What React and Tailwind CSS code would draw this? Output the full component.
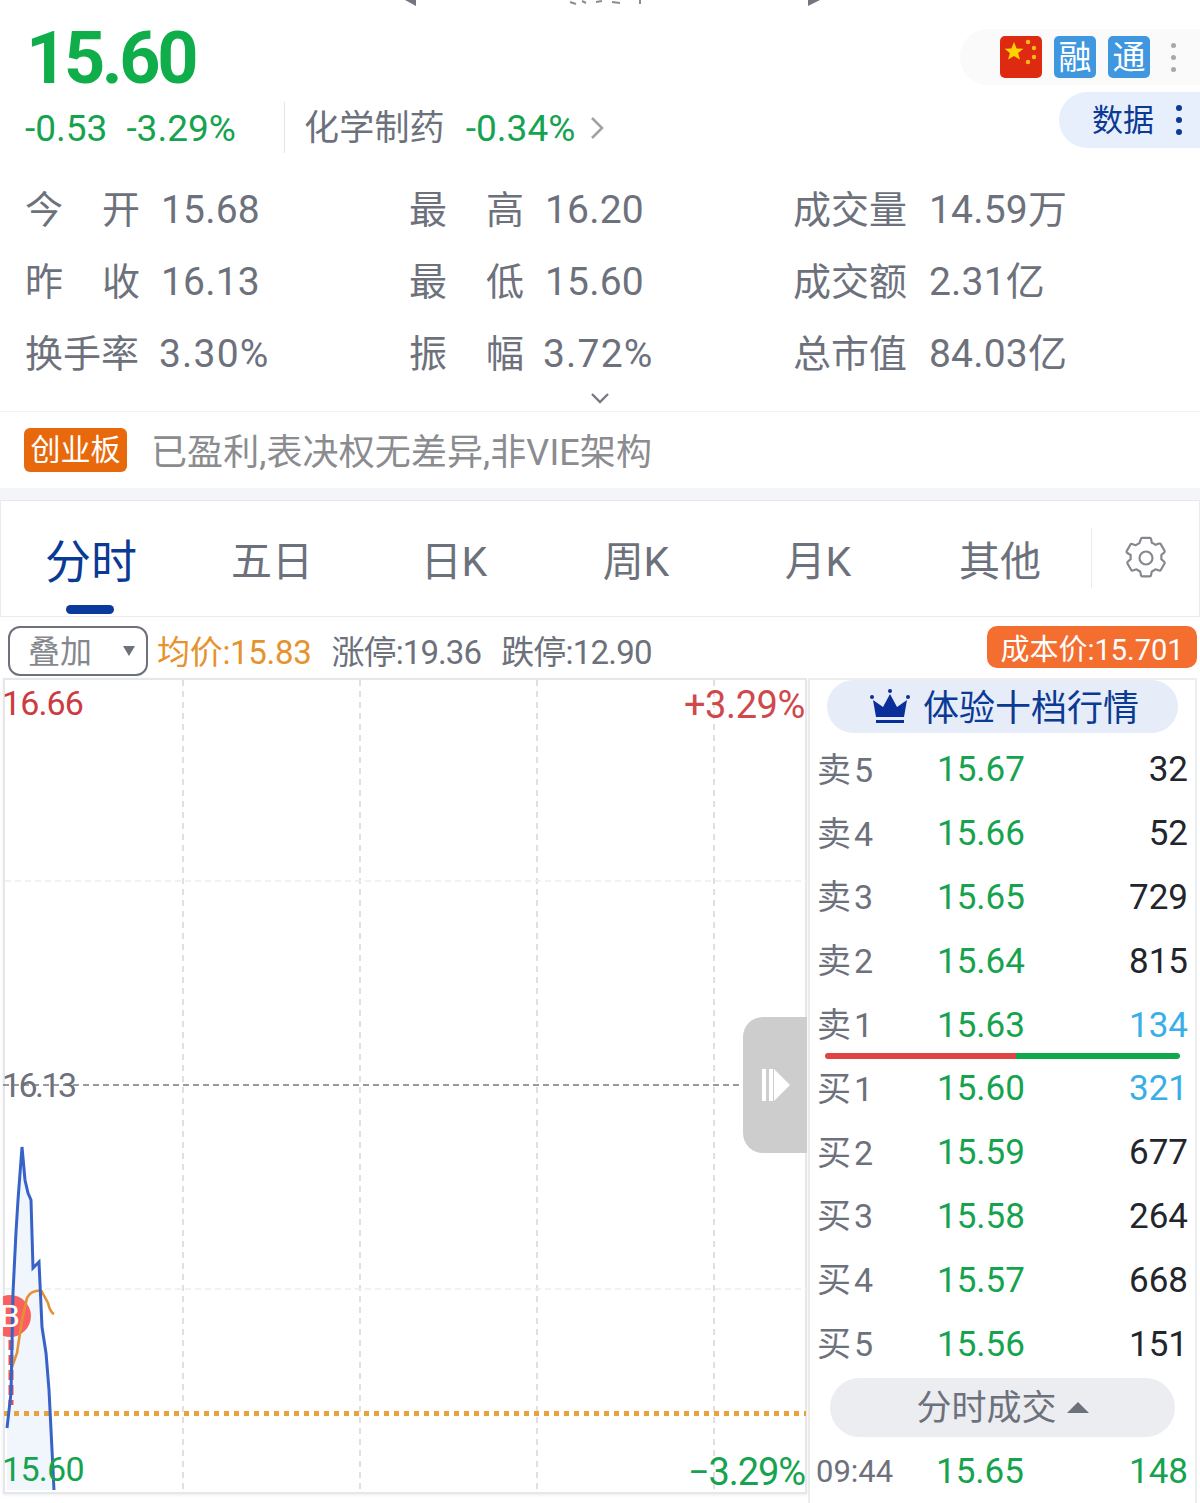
import React from "react";

const FONT = "font-['Roboto','Noto_Sans_CJK_SC',sans-serif]";
const stats = [
  [["今", "开"], "15.68", ["最", "高"], "16.20", ["成交量"], "14.59万"],
  [["昨", "收"], "16.13", ["最", "低"], "15.60", ["成交额"], "2.31亿"],
  [["换手率"], "3.30%", ["振", "幅"], "3.72%", ["总市值"], "84.03亿"],
];
const tabs = ["五日", "日K", "周K", "月K", "其他"];
const sells = [["卖5", "15.67", "32"], ["卖4", "15.66", "52"], ["卖3", "15.65", "729"], ["卖2", "15.64", "815"], ["卖1", "15.63", "134"]];
const buys = [["买1", "15.60", "321"], ["买2", "15.59", "677"], ["买3", "15.58", "264"], ["买4", "15.57", "668"], ["买5", "15.56", "151"]];

function Stat({ label, value }) {
  const pct = value.includes("%");
  return (
    <div className="flex items-center h-[72px]">
      <div className="w-[115px] flex justify-between text-[38px] leading-none text-[#6d717c]">
        {label.map((l) => <span key={l}>{l}</span>)}
      </div>
      <div className={`text-[39px] leading-none text-[#6d717c] ${pct ? "ml-[19px] tracking-[1.2px]" : "ml-[21px] tracking-[0.2px]"}`}>{value}</div>
    </div>
  );
}

function BookRow({ row, blue }) {
  return (
    <div className="flex items-center h-[63.8px] shrink-0 pl-[7px] pr-[7px]">
      <span className="w-[120px] text-[34px] leading-none text-[#6d717c] tracking-[3px]">{row[0]}</span>
      <span className="text-[35px] leading-none text-[#16a34f]">{row[1]}</span>
      <span className={`ml-auto text-[35px] leading-none ${blue ? "text-[#3aaee8]" : "text-[#23252c]"}`}>{row[2]}</span>
    </div>
  );
}

export default function App() {
  return (
    <div className={`relative w-[1200px] h-[1503px] overflow-hidden bg-white ${FONT}`}>
      <svg className="absolute left-0 top-0" width="1200" height="8" viewBox="0 0 1200 8">
        <path d="M416 0V6L405 0ZM808 0V6L820 0Z" fill="#73767f" />
        <path d="M570 2l6 2M582 1l4 2M596 2l6-1M612 2l8 1M640 0v4" stroke="#8b8d95" strokeWidth="2" fill="none" />
      </svg>

      {/* header */}
      <div className="h-[412px] border-b border-[#f2f3f5] relative">
        <div className="flex justify-between h-[92px]">
          <div className="ml-[26px] mt-[16px] text-[72px] leading-[86px] font-bold text-[#0fae4a] tracking-[-3.4px]">15.60</div>
          <div className="mt-[29px] h-[56px] w-[240px] rounded-l-[28px] bg-[#fafafa] flex items-center pl-[40px] gap-[12px]">
            <svg width="42" height="42" viewBox="0 0 42 42" className="shrink-0">
              <rect width="42" height="42" rx="5" fill="#df2a12" />
              <polygon fill="#ffd400" points="14,6 16.6,12.4 23.4,12.8 18.1,17 19.9,23.6 14,20 8.1,23.6 9.9,17 4.6,12.8 11.4,12.4" />
              <circle cx="28" cy="6" r="2.2" fill="#fbb81a" /><circle cx="34" cy="12" r="2.2" fill="#fbb81a" />
              <circle cx="34" cy="21" r="2.2" fill="#fbb81a" /><circle cx="28" cy="26" r="2.2" fill="#fbb81a" />
            </svg>
            {["融", "通"].map((t) => (
              <div key={t} className="w-[42px] h-[42px] rounded-[5px] bg-[#3f97e0] text-white text-[33px] leading-none flex items-center justify-center">{t}</div>
            ))}
            <div className="ml-[9px] flex flex-col gap-[7px]">
              <span className="w-[5px] h-[5px] rounded-full bg-[#a8a8a8]" /><span className="w-[5px] h-[5px] rounded-full bg-[#a8a8a8]" /><span className="w-[5px] h-[5px] rounded-full bg-[#a8a8a8]" />
            </div>
          </div>
        </div>
        <div className="flex justify-between h-[62px]">
          <div className="flex items-start pl-[25px]">
            <div className="mt-[17px] flex gap-[19px] w-[259px] text-[37px] leading-[40px] text-[#16a34f]"><span>-0.53</span><span>-3.29%</span></div>
            <div className="mt-[10px] w-px h-[51px] bg-[#e4e5e8]" />
            <div className="mt-[17px] ml-[19px] flex items-center text-[35px] leading-[40px]">
              <span className="text-[#6d717c] tracking-[0.2px]">化学制药</span>
              <span className="ml-[21px] text-[37px] text-[#16a34f]">-0.34%</span>
              <svg width="16" height="26" viewBox="0 0 16 26" className="ml-[14px] -mt-[2px]" fill="none" stroke="#a0a2a8" strokeWidth="2.6"><path d="M3 3l10 10-10 10" /></svg>
            </div>
          </div>
          <div className="h-[56px] w-[141px] rounded-l-[28px] bg-[#e8effc] flex items-center pl-[33px]">
            <span className="text-[31px] leading-none text-[#0b3a94]">数据</span>
            <div className="ml-[22px] flex flex-col gap-[6px]">
              <span className="w-[6px] h-[6px] rounded-full bg-[#0b3a94]" /><span className="w-[6px] h-[6px] rounded-full bg-[#0b3a94]" /><span className="w-[6px] h-[6px] rounded-full bg-[#0b3a94]" />
            </div>
          </div>
        </div>
        <div className="grid grid-cols-[384px_384px_384px] pl-[25px] mt-[20px]">
          {stats.map((r, i) => (
            <React.Fragment key={i}>
              <Stat label={r[0]} value={r[1]} />
              <Stat label={r[2]} value={r[3]} />
              <Stat label={r[4]} value={r[5]} />
            </React.Fragment>
          ))}
        </div>
        <svg width="20" height="12" viewBox="0 0 20 12" className="mx-auto mt-[2px]" fill="none" stroke="#777a84" strokeWidth="2.4"><path d="M2 2l8 8 8-8" /></svg>
      </div>

      {/* tag */}
      <div className="h-[76px] flex items-center pl-[24px]">
        <div className="w-[103px] h-[44px] rounded-[6px] bg-[#e8690b] text-white text-[30px] leading-none flex items-center justify-center">创业板</div>
        <div className="ml-[24px] pt-[6px] text-[36px] leading-none text-[#8b8c90] whitespace-nowrap tracking-[0.1px]">已盈利,表决权无差异,非VIE架构</div>
      </div>
      <div className="h-[13px] bg-[#f4f5f8] border-b border-[#e8e9ec]" />

      {/* tabs */}
      <div className="relative h-[116px] flex items-center border-x border-b border-[#eaebee]">
        <div className="w-[180px] pt-[7px] text-center text-[46px] leading-none text-[#0b3a94]">分时</div>
        {tabs.map((t) => (
          <div key={t} className="w-[182px] pt-[7px] text-center text-[41px] leading-none text-[#6d717c]">{t}</div>
        ))}
        <div className="absolute left-[65px] bottom-[2px] w-[48px] h-[9px] rounded-full bg-[#0a3a9e]" />
        <div className="absolute left-[1090px] top-[27px] w-px h-[60px] bg-[#eaebee]" />
        <svg className="absolute left-[1119px] top-[31px]" width="52" height="52" viewBox="0 0 24 24" fill="none" stroke="#85878e" strokeWidth="1" strokeLinejoin="round">
          <path d="M9.67 3.17a.6.6 0 0 1 .58-.47h3.5a.6.6 0 0 1 .58.47l.36 1.8a7.6 7.6 0 0 1 1.67.96l1.74-.59a.6.6 0 0 1 .71.27l1.75 3.04a.6.6 0 0 1-.12.74l-1.38 1.22a7.6 7.6 0 0 1 0 1.93l1.38 1.22a.6.6 0 0 1 .12.74l-1.75 3.04a.6.6 0 0 1-.71.27l-1.74-.59a7.6 7.6 0 0 1-1.67.96l-.36 1.8a.6.6 0 0 1-.58.47h-3.5a.6.6 0 0 1-.58-.47l-.36-1.8a7.6 7.6 0 0 1-1.67-.96l-1.74.59a.6.6 0 0 1-.71-.27l-1.75-3.04a.6.6 0 0 1 .12-.74l1.38-1.22a7.6 7.6 0 0 1 0-1.93L3.21 9.58a.6.6 0 0 1-.12-.74l1.75-3.04a.6.6 0 0 1 .71-.27l1.74.59a7.6 7.6 0 0 1 1.67-.96z" />
          <circle cx="12" cy="12" r="3" />
        </svg>
      </div>

      {/* toolbar */}
      <div className="h-[61px] flex items-start pl-[8px] pr-[3px]">
        <div className="mt-[9px] w-[140px] h-[50px] rounded-[12px] border-2 border-[#6d717c] flex items-center pl-[18px] pr-[11px] justify-between">
          <span className="pt-[2px] text-[32px] leading-none text-[#85878e]">叠加</span>
          <span className="w-0 h-0 border-x-[6px] border-x-transparent border-t-[10px] border-t-[#6d717c]" />
        </div>
        <div className="mt-[16px] ml-[9px] text-[33px] leading-[40px] text-[#e6922e] tracking-[-0.3px]">均价:15.83</div>
        <div className="mt-[16px] ml-[20px] text-[33px] leading-[40px] text-[#6d717c] tracking-[-0.9px]">涨停:19.36</div>
        <div className="mt-[16px] ml-[20px] text-[33px] leading-[40px] text-[#6d717c] tracking-[-0.8px]">跌停:12.90</div>
        <div className="mt-[9px] ml-auto w-[210px] h-[42px] pt-[6px] rounded-[10px] bg-[#f46e2f] text-white text-[29px] leading-none flex items-center justify-center">成本价:15.701</div>
      </div>

      {/* chart + book */}
      <div className="flex items-start h-[825px] pl-[3px] pr-[3px]">
        <div className="relative w-[804px] h-[816px] border-2 border-[#e6e7ea] shadow-[0_1px_3px_rgba(0,0,0,0.08)] shrink-0">
          <svg className="absolute -left-[2px] -top-[2px]" width="804" height="816" viewBox="3 678 804 816">
            <path d="M183 680V1492M360 680V1492M537 680V1492M714 680V1492" stroke="#cfd0d3" strokeWidth="1.3" strokeDasharray="6 5" />
            <path d="M5 881H806M5 1289H806" stroke="#ededee" strokeWidth="1.3" strokeDasharray="6 4" />
            <path d="M3 1085H806" stroke="#77797f" strokeWidth="1.6" strokeDasharray="6 4" />
            <path d="M7 1428L11 1393L13 1293L16 1232L18 1200L22 1147L25 1180L28 1193L31 1200L33 1268L39 1262L42 1327L46 1353L49 1390L54 1490H7Z" fill="#f1f6fd" />
            <path d="M4 1413.5H806" stroke="#e8a33c" strokeWidth="5" strokeDasharray="5 5" />
            <path d="M11 1340V1405" stroke="#e94f4f" strokeWidth="5" strokeDasharray="10 5" />
            <circle cx="10" cy="1316" r="21" fill="#fb6060" />
            <path d="M10 1373L17 1353L22 1320L27 1298Q30 1292 36 1291T42 1292L48 1303Q50 1312 54 1314" fill="none" stroke="#e49135" strokeWidth="2.6" />
            <path d="M7 1428L11 1393L13 1293L16 1232L18 1200L22 1147L25 1180L28 1193L31 1200L33 1268L39 1262L42 1327L46 1353L49 1390L54 1490" fill="none" stroke="#3762c8" strokeWidth="3" />
          </svg>
          <span className="absolute left-[-5px] top-[617px] text-[32px] leading-[38px] text-white">B</span>
          <span className="absolute left-[-3px] top-[6px] text-[34px] leading-none text-[#cc3b3f] tracking-[-0.9px]">16.66</span>
          <span className="absolute right-0 top-[6px] text-[38px] leading-none text-[#d0484c] tracking-[-0.4px]">+3.29%</span>
          <span className="absolute left-[-3px] top-[388px] text-[34px] leading-none text-[#6d717c] tracking-[-2.6px]">16.13</span>
          <span className="absolute left-[-3px] bottom-[6px] text-[34px] leading-none text-[#16a34f] tracking-[-0.7px]">15.60</span>
          <span className="absolute right-0 bottom-[1px] text-[38px] leading-none text-[#16a34f] tracking-[-1.1px]">−3.29%</span>
          <div className="absolute right-[-2px] top-[337px] w-[64px] h-[136px] rounded-l-[20px] bg-[#cdcdcd] flex items-center justify-center pl-[3px]">
            <svg width="30" height="34" viewBox="0 0 30 34" fill="#fff"><rect x="0" y="1" width="4" height="32" /><rect x="7" y="1" width="4" height="32" /><path d="M12 1L28 17L12 33Z" /></svg>
          </div>
        </div>
        <div className="w-[389px] h-[825px] ml-[1px] border-l-2 border-r-2 border-t-2 border-[#eceded] flex flex-col">
          <div className="mx-[17px] h-[53px] shrink-0 rounded-full bg-[#e6ecf8] flex items-center pl-[43px]">
            <svg width="40" height="36" viewBox="0 0 40 36" fill="#0b2f9a">
              <path d="M6 28L3 11L13 18L20 5L27 18L37 11L34 28Z" />
              <rect x="6" y="31" width="28" height="3" />
              <circle cx="2" cy="8" r="2" /><circle cx="20" cy="2" r="2" /><circle cx="38" cy="8" r="2" />
            </svg>
            <span className="ml-[13px] pt-[4px] text-[36px] leading-none text-[#0b3a94]">体验十档行情</span>
          </div>
          <div className="h-[5px] shrink-0" />
          {sells.map((r, i) => <BookRow key={r[0]} row={r} blue={i === 4} />)}
          <div className="mx-[15px] -mt-[4px] -mb-[2px] h-[6px] shrink-0 rounded-full flex overflow-hidden">
            <div className="w-[191px] bg-[#df4343]" /><div className="flex-1 bg-[#10a84a]" />
          </div>
          {buys.map((r, i) => <BookRow key={r[0]} row={r} blue={i === 0} />)}
          <div className="mx-[20px] mt-[2px] h-[59px] shrink-0 rounded-full bg-[#ecedf0] flex items-center justify-center">
            <span className="pt-[2px] text-[35px] leading-none text-[#6d717c]">分时成交</span>
            <span className="ml-[10px] w-0 h-0 border-x-[11px] border-x-transparent border-b-[11px] border-b-[#6d717c]" />
          </div>
          <div className="flex items-center h-[66px] shrink-0 pt-[4px] pl-[6px] pr-[7px]">
            <span className="w-[120px] text-[31px] leading-none text-[#6d717c]">09:44</span>
            <span className="text-[35px] leading-none text-[#16a34f]">15.65</span>
            <span className="ml-auto text-[35px] leading-none text-[#16a34f]">148</span>
          </div>
        </div>
      </div>
    </div>
  );
}
